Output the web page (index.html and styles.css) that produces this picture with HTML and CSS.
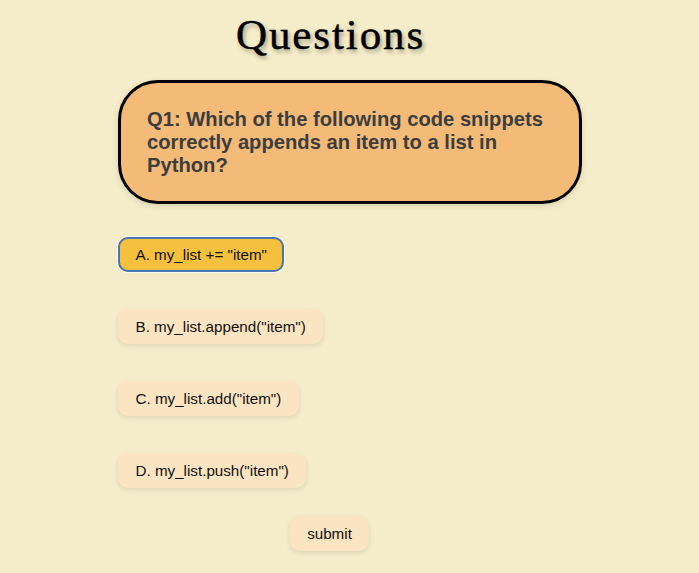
FILE: index.html
```html
<!DOCTYPE html>
<html lang="en">
<head>
    <meta charset="UTF-8">
    <meta name="viewport" content="width=device-width, initial-scale=1.0">
    <title>Questions</title>
    <link rel="stylesheet" href="styles.css">
</head>
<body>
    <h1 class="page-title">Questions</h1>

    <div class="quiz">
        <div class="question-box">
            <h2>Q1: Which of the following code snippets correctly appends an item to a list in Python?</h2>
        </div>

        <div class="options">
            <button type="button" class="option selected">A. my_list += "item"</button>
            <button type="button" class="option">B. my_list.append("item")</button>
            <button type="button" class="option">C. my_list.add("item")</button>
            <button type="button" class="option">D. my_list.push("item")</button>
        </div>

        <div class="submit-row">
            <button type="submit" class="submit-btn">submit</button>
        </div>
    </div>
</body>
</html>
```

FILE: styles.css
```css
* {
    margin: 0;
    padding: 0;
    box-sizing: border-box;
}

body {
    font-family: 'Liberation Sans', Arial, sans-serif;
    background: #f5edc9;
    height: 573px;
    overflow: hidden;
}

.page-title {
    font-family: 'Liberation Serif', serif;
    font-size: 43px;
    font-weight: 400;
    line-height: 48px;
    letter-spacing: 1.9px;
    color: #000;
    -webkit-text-stroke: 0.5px #000;
    text-shadow: 2px 3px 4px rgba(0, 0, 0, 0.35);
    padding-top: 11px;
    margin-left: 236px;
    height: 80px;
}

.quiz {
    width: 464px;
    margin-left: 118px;
}

.question-box {
    background: #f3ba78;
    border: 3px solid #000;
    border-radius: 40px;
    box-shadow: 0 2px 6px rgba(0, 0, 0, 0.12);
    padding: 25px 26px;
    height: 124px;
}

.question-box h2 {
    font-size: 20.2px;
    font-weight: 700;
    line-height: 23px;
    color: #3d3d3d;
}

.options {
    display: flex;
    flex-direction: column;
    align-items: flex-start;
    gap: 37px;
    margin-top: 33px;
}

.option,
.submit-btn {
    font-family: 'Liberation Sans', Arial, sans-serif;
    font-size: 15.2px;
    color: #111;
    background: #fbe4c1;
    border: none;
    border-radius: 10px;
    box-shadow: 0 2px 5px rgba(0, 0, 0, 0.1);
    height: 35px;
    padding: 0 17.5px;
}

.option.selected {
    background: #f4c03e;
    outline: 2px solid #4a74b8;
    outline-offset: -2px;
    box-shadow: 0 0 0 1px rgba(255, 255, 255, 0.7);
}

.submit-row {
    display: flex;
    margin-top: 28px;
    margin-left: 172px;
}

.submit-btn {
    width: 79px;
    padding: 0;
}
```
